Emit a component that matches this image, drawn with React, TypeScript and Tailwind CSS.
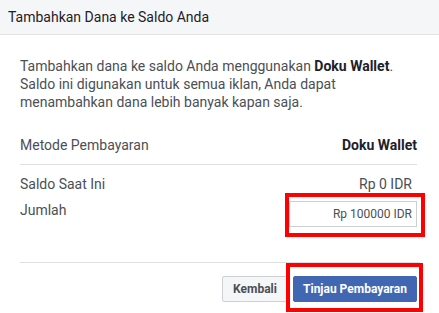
import React from "react";

export default function App() {
  return (
    <div
      className="relative w-[439px] h-[313px] overflow-hidden bg-white"
      style={{ fontFamily: "Roboto, 'Liberation Sans', sans-serif" }}
    >
      <div className="h-[35px] bg-[#f5f6f7] border-b border-[#e3e4e6] flex items-center pl-2">
        <span className="text-[14px] leading-[18px] text-[#1d2129]">Tambahkan Dana ke Saldo Anda</span>
      </div>
      <div className="pl-5 pr-[22px] pt-[22px]">
        <p className="text-[14px] leading-[18px] text-[#4b4f56]">
          Tambahkan dana ke saldo Anda menggunakan <span className="font-bold text-[#1d2129]">Doku Wallet</span>.
          <br />
          Saldo ini digunakan untuk semua iklan, Anda dapat
          <br />
          menambahkan dana lebih banyak kapan saja.
        </p>
        <div className="mt-[25px] flex justify-between text-[14px] leading-[18px]">
          <span className="text-[#4b4f56]">Metode Pembayaran</span>
          <span className="font-bold text-[#1d2129]">Doku Wallet</span>
        </div>
        <div className="mt-[10px] h-px bg-[#dddfe2]" />
        <div className="mt-[10px] flex justify-between text-[14px] leading-[18px] text-[#4b4f56]">
          <span>Saldo Saat Ini</span>
          <span className="pr-[5px]">Rp 0 IDR</span>
        </div>
        <div className="mt-2 flex justify-between items-start text-[14px] leading-[18px] text-[#4b4f56]">
          <span>Jumlah</span>
          <div className="w-[128px] h-[26px] border border-[#ccd0d5] flex items-center justify-end pr-[4px] text-[12px] text-[#4b4f56] bg-white">
            Rp 100000 IDR
          </div>
        </div>
        <div className="mt-[35px] h-px bg-[#dddfe2] mr-[-3px]" />
        <div className="mt-[13px] flex justify-end gap-[5px]">
          <button className="h-[26px] w-[66px] border border-[#ccd0d5] bg-[#f5f6f7] rounded-[2px] text-[12px] font-bold text-[#4b4f56]">
            Kembali
          </button>
          <button className="h-[26px] w-[124px] border border-[#4267b2] bg-[#4267b2] rounded-[2px] text-[12px] font-bold text-white">
            Tinjau Pembayaran
          </button>
        </div>
      </div>
      <div className="absolute left-[285px] top-[193px] w-[140px] h-[44px] border-4 border-[#ff0000]" />
      <div className="absolute left-[286px] top-[263px] w-[137px] h-[49px] border-4 border-[#ff0000]" />
    </div>
  );
}
